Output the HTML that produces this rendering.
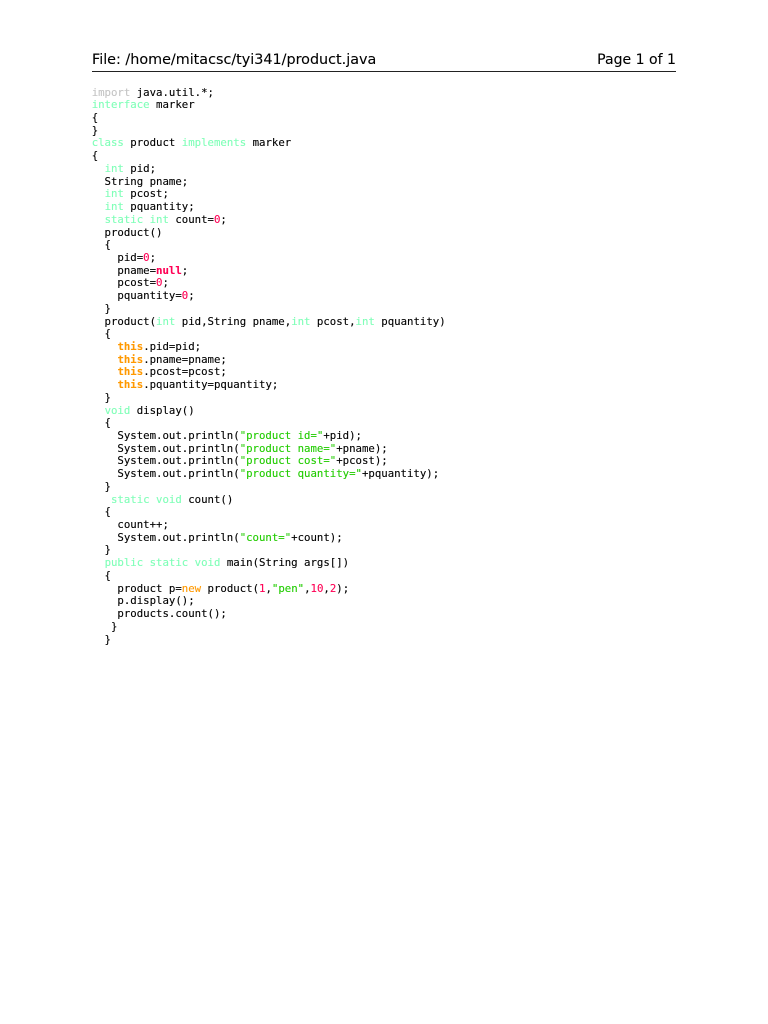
<!DOCTYPE html>
<html><head><meta charset="utf-8"><style>
html,body{margin:0;padding:0;background:#fff;width:768px;height:1024px;overflow:hidden}
.h{position:absolute;top:51px;font:14.35px/18px "DejaVu Sans",sans-serif;color:#000;white-space:pre;filter:blur(.3px);-webkit-text-stroke:.1px #000}
#r{position:absolute;left:92px;top:71px;width:584px;height:1px;background:#222}
pre{position:absolute;left:91.7px;top:86.6px;margin:0;font:10.7px/12.72px "DejaVu Sans Mono",monospace;color:#000;filter:blur(.3px);-webkit-text-stroke:.12px currentColor}
.k{color:#80ffb8}.i{color:#c4c4c4}.n{color:#ff0055}.s{color:#22cc00}.o{color:#ff9900}.b{font-weight:bold}
</style></head><body>
<div class="h" style="left:92px">File: /home/mitacsc/tyi341/product.java</div>
<div class="h" style="right:92px;font-size:14.05px">Page 1 of 1</div>
<div id="r"></div>
<pre><span class="i">import</span> java.util.*;
<span class="k">interface</span> marker
{
}
<span class="k">class</span> product <span class="k">implements</span> marker
{
  <span class="k">int</span> pid;
  String pname;
  <span class="k">int</span> pcost;
  <span class="k">int</span> pquantity;
  <span class="k">static</span> <span class="k">int</span> count=<span class="n">0</span>;
  product()
  {
    pid=<span class="n">0</span>;
    pname=<span class="n b">null</span>;
    pcost=<span class="n">0</span>;
    pquantity=<span class="n">0</span>;
  }
  product(<span class="k">int</span> pid,String pname,<span class="k">int</span> pcost,<span class="k">int</span> pquantity)
  {
    <span class="o b">this</span>.pid=pid;
    <span class="o b">this</span>.pname=pname;
    <span class="o b">this</span>.pcost=pcost;
    <span class="o b">this</span>.pquantity=pquantity;
  }
  <span class="k">void</span> display()
  {
    System.out.println(<span class="s">"product id="</span>+pid);
    System.out.println(<span class="s">"product name="</span>+pname);
    System.out.println(<span class="s">"product cost="</span>+pcost);
    System.out.println(<span class="s">"product quantity="</span>+pquantity);
  }
   <span class="k">static</span> <span class="k">void</span> count()
  {
    count++;
    System.out.println(<span class="s">"count="</span>+count);
  }
  <span class="k">public</span> <span class="k">static</span> <span class="k">void</span> main(String args[])
  {
    product p=<span class="o">new</span> product(<span class="n">1</span>,<span class="s">"pen"</span>,<span class="n">10</span>,<span class="n">2</span>);
    p.display();
    products.count();
   }
  }</pre>
</body></html>
